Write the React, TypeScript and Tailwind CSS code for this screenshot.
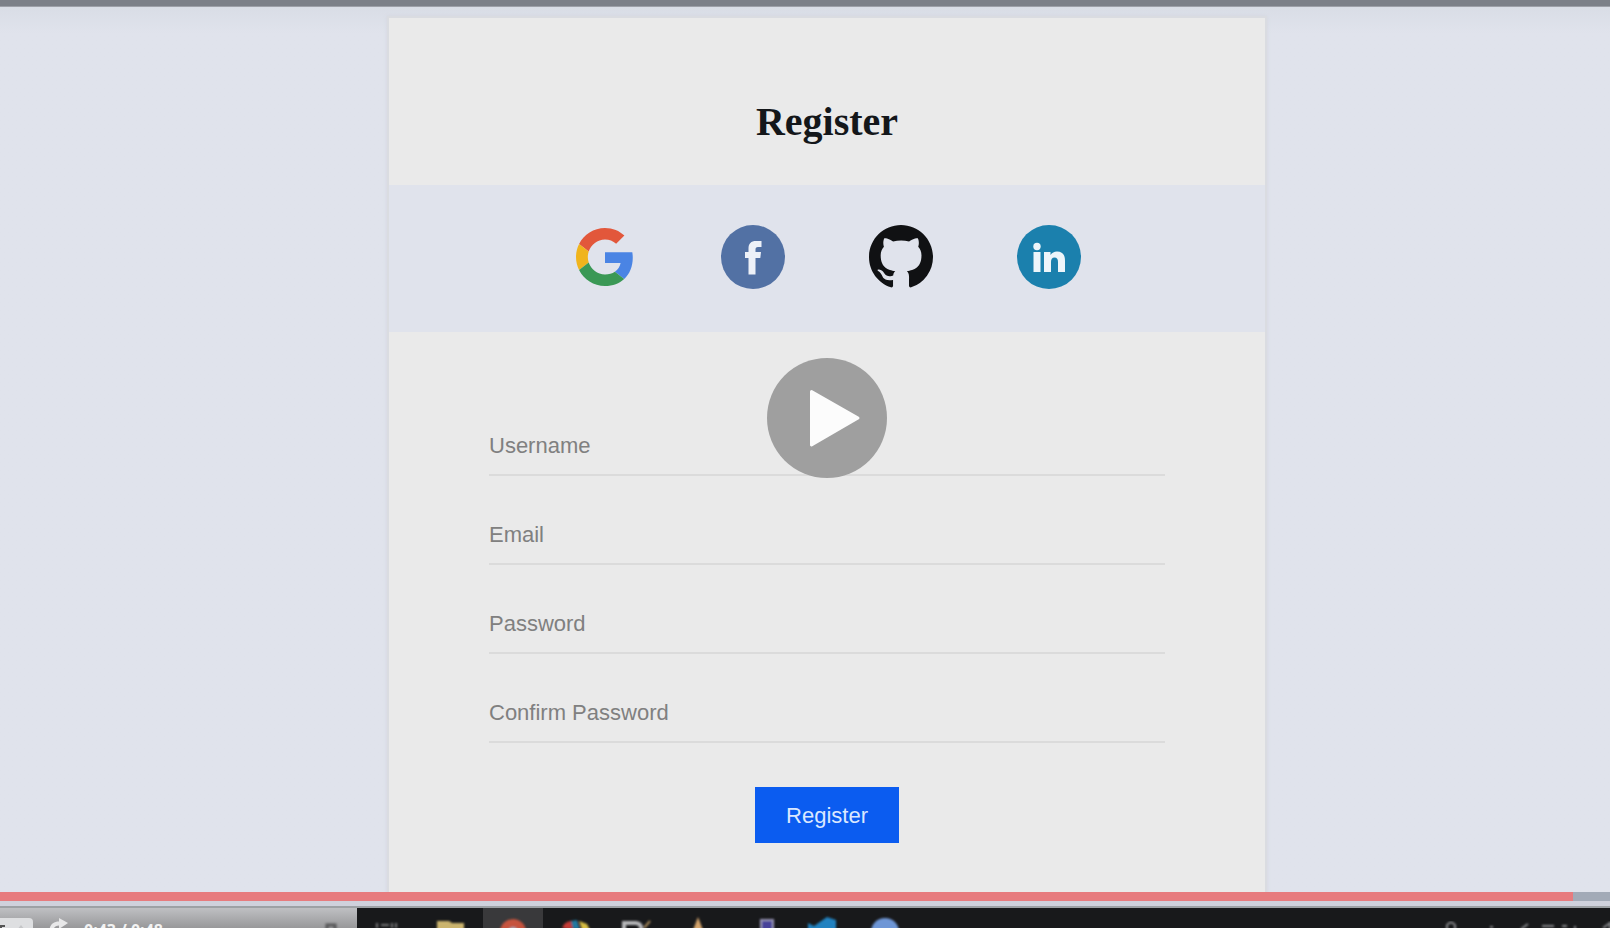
import type { ReactNode } from "react";

const fields = [
  { id: "username", label: "Username", type: "text" },
  { id: "email", label: "Email", type: "email" },
  { id: "password", label: "Password", type: "password" },
  { id: "confirm", label: "Confirm Password", type: "password" },
];

function GoogleIcon() {
  return (
    <svg viewBox="0 0 48 48" className="h-[58px] w-[58px]">
      <path fill="#e2573b" d="M24 9.5c3.54 0 6.71 1.22 9.21 3.6l6.85-6.85C35.9 2.38 30.47 0 24 0 14.62 0 6.51 5.38 2.56 13.22l7.98 6.19C12.43 13.72 17.74 9.5 24 9.5z" />
      <path fill="#4a84e4" d="M46.98 24.55c0-1.57-.15-3.09-.38-4.55H24v9.02h12.94c-.58 2.96-2.26 5.48-4.78 7.18l7.73 6c4.51-4.18 7.09-10.36 7.09-17.65z" />
      <path fill="#f0b41c" d="M10.53 28.59c-.48-1.45-.76-2.99-.76-4.59s.27-3.14.76-4.59l-7.98-6.19C.92 16.46 0 20.12 0 24c0 3.88.92 7.54 2.56 10.78l7.97-6.19z" />
      <path fill="#3a9855" d="M24 48c6.48 0 11.93-2.13 15.89-5.81l-7.73-6c-2.15 1.45-4.92 2.3-8.16 2.3-6.26 0-11.57-4.22-13.47-9.91l-7.98 6.19C6.51 42.62 14.62 48 24 48z" />
    </svg>
  );
}

function FacebookIcon() {
  return (
    <svg viewBox="0 0 64 64" className="h-16 w-16">
      <circle cx="32" cy="32" r="32" fill="#5271a4" />
      <path fill="#edf1f8" d="M27.500 49.500V33H24v-6h3.500v-3.500c0-5 2.500-7.500 7.500-7.500h5.500v6H37c-2 0-2.500 1-2.500 2.500V27H40l-.7 6h-4.800v16.500z" />
    </svg>
  );
}

function GithubIcon() {
  return (
    <svg viewBox="0 0 16 16" className="h-16 w-16">
      <path fill="#101113" d="M8 0C3.580 0 0 3.580 0 8c0 3.540 2.290 6.530 5.470 7.590.4.070.55-.17.55-.38 0-.19-.01-.82-.01-1.490-2.010.37-2.530-.49-2.690-.94-.09-.23-.48-.94-.82-1.130-.28-.15-.68-.52-.01-.53.63-.01 1.080.58 1.230.82.72 1.210 1.870.87 2.330.66.07-.52.28-.87.51-1.070-1.780-.2-3.640-.89-3.640-3.950 0-.87.31-1.590.82-2.150-.08-.2-.36-1.020.08-2.120 0 0 .67-.21 2.200.82.64-.18 1.320-.27 2-.27s1.360.09 2 .27c1.530-1.040 2.200-.82 2.200-.82.44 1.100.16 1.920.08 2.120.51.56.82 1.270.82 2.150 0 3.070-1.870 3.750-3.650 3.950.29.25.54.73.54 1.480 0 1.070-.01 1.930-.01 2.200 0 .21.15.46.55.38A8.010 8.010 0 0 0 16 8c0-4.420-3.580-8-8-8z" />
    </svg>
  );
}

function LinkedinIcon() {
  return (
    <svg viewBox="0 0 64 64" className="h-16 w-16">
      <circle cx="32" cy="32" r="32" fill="#1b80ad" />
      <circle cx="20" cy="21.500" r="3.700" fill="#edf5fa" />
      <path fill="#edf5fa" d="M16.500 27h7v20h-7zM27 27h6.500v3c1.500-2.300 3.700-3.500 6.500-3.500 5.500 0 8 3.500 8 9V47h-7V37c0-3-1-4.500-3.500-4.500s-3.500 2-3.500 4.500v10h-7z" />
    </svg>
  );
}

const providers: { name: string; icon: ReactNode }[] = [
  { name: "Google", icon: <GoogleIcon /> },
  { name: "Facebook", icon: <FacebookIcon /> },
  { name: "GitHub", icon: <GithubIcon /> },
  { name: "LinkedIn", icon: <LinkedinIcon /> },
];

function RegisterCard() {
  return (
    <section className="w-full max-w-[880px] border-2 border-[#dadce1] bg-[#eaeaea] shadow-[0_0_4px_#d3d6df]">
      <h1 className="pt-[79px] pb-[38px] text-center font-['Liberation_Serif',serif] text-[40px] leading-[50px] font-bold text-[#14171a]">
        Register
      </h1>
      <div className="flex h-[147px] items-center justify-center gap-[84px] bg-[#e0e3ec] pb-1">
        {providers.map((p) => (
          <a key={p.name} href="#" aria-label={p.name} className="flex h-16 w-16 items-center justify-center">
            {p.icon}
          </a>
        ))}
      </div>
      <form className="flex flex-col px-[100px] pt-[84px]" onSubmit={(e) => e.preventDefault()}>
        {fields.map((f) => (
          <input
            key={f.id}
            id={f.id}
            type={f.type}
            placeholder={f.label}
            aria-label={f.label}
            className="mb-[29px] h-[60px] w-full border-b-2 border-[#dbdbdb] bg-transparent pt-[2px] text-[22px] text-[#555] outline-none placeholder:text-[#808080]"
          />
        ))}
        <button type="submit" className="mt-[15px] mb-20 h-14 w-36 self-center bg-[#0b5cf0] text-[22px] text-[#dbe8ff]">
          Register
        </button>
      </form>
    </section>
  );
}

function PlayButton() {
  return (
    <button type="button" aria-label="Play" className="absolute top-[351px] left-1/2 h-[120px] w-[120px] -translate-x-1/2 rounded-full bg-[#9f9f9f]">
      <svg viewBox="0 0 120 120" className="h-full w-full">
        <path d="M44.500 33.500 91 60 44.500 87Z" fill="#fcfcfc" stroke="#fcfcfc" strokeWidth="3" strokeLinejoin="round" />
      </svg>
    </button>
  );
}

function Controls() {
  return (
    <div className="flex h-full w-[357px] shrink-0 items-start bg-linear-to-b from-[#bfc0c3] to-[#98989a]">
      <button type="button" aria-label="Speed" className="mt-[10px] h-6 w-[33px] shrink-0 rounded-tr-sm bg-[#dedfe1]">
        <svg viewBox="0 0 33 24" className="h-6 w-[33px]">
          <path d="M5 8H0M1 8v4" stroke="#555" strokeWidth="2" />
          <path d="m21 7-4 5h8z" fill="#c4c5c7" />
        </svg>
      </button>
      <button type="button" aria-label="Share" className="mt-[10px] ml-4 shrink-0">
        <svg viewBox="0 0 20 20" className="h-5 w-5">
          <path d="M10 0 19 5l-9 6V7.500C5 7.500 4 11 4 16H0C0 8 3 3.500 10 3.500Z" fill="#e8e8e9" />
        </svg>
      </button>
      <span className="mt-[10px] ml-[15px] font-['Open_Sans',sans-serif] text-[16px] leading-6 font-bold whitespace-nowrap text-[#f2f2f2]">0:43 / 0:48</span>
      <svg viewBox="0 0 14 10" className="mt-[14px] mr-[19px] ml-auto h-[10px] w-[14px] shrink-0 blur-[1px]">
        <path d="M3 10V3h8v7" fill="none" stroke="#58585a" strokeWidth="3" />
      </svg>
    </div>
  );
}

function Taskbar() {
  return (
    <div className="flex min-w-0 flex-1 justify-between overflow-hidden bg-[#18191b]">
      <svg viewBox="0 0 560 20" className="h-5 w-[560px] shrink-0">
        <defs>
          <filter id="soft" x="-10%" y="-10%" width="120%" height="120%">
            <feGaussianBlur stdDeviation="1" />
          </filter>
        </defs>
        <path d="M126 0h60v20h-60z" fill="#39393b" />
        <g filter="url(#soft)">
          <path d="M20 15v5M24 17h8M35 15v5M39 15v5" stroke="#737476" strokeWidth="2" />
          <path d="M80 13h12l3 2h12v8H80z" fill="#cbb46d" />
          <circle cx="156" cy="24" r="13" fill="#c6533c" />
          <circle cx="156" cy="24" r="5" fill="#a3a1ab" />
          <path d="M205 20q2-6 9-7l2 9z" fill="#c53b35" />
          <path d="m214 13 6-1 3 9h-7z" fill="#2279a0" />
          <path d="m222 13 8 3 3 6h-8z" fill="#d7bd43" />
          <path d="M267 22v-7h12q6 1 5 7" fill="none" stroke="#b7b8ba" strokeWidth="4" />
          <path d="m287 20 6-7" stroke="#a98a59" strokeWidth="2" />
          <path d="m341 9 5 13h-10z" fill="#d4a46c" />
          <path d="M404 22V12h12v10" fill="#46429a" stroke="#9895b7" strokeWidth="2" />
          <path d="m451 15 6 3 13-9 9 3v10h-28" fill="#2182c0" />
          <circle cx="528" cy="24" r="14" fill="#6e96d6" />
        </g>
      </svg>
      <svg viewBox="0 0 190 20" className="h-5 w-[190px] shrink-0">
        <g fill="none" stroke="#86878a" strokeWidth="2" filter="url(#soft)">
          <path d="M27 22v-5q4-5 8 0v5M70 19h3M101 21l7-5M122 18h12M142 18h5M155 18v3M183 20l7-5v7" />
        </g>
      </svg>
    </div>
  );
}

export default function App() {
  return (
    <div className="flex h-screen flex-col overflow-hidden bg-[#e0e3ec] font-['Liberation_Sans',Arial,sans-serif]">
      <div className="h-[7px] shrink-0 border-b border-[#9da0a8] bg-[#7c8088]" />
      <main className="min-h-0 flex-1 overflow-hidden bg-linear-to-b from-[#d9dde6] to-[#e0e3ec] to-3% pl-11">
        <div className="relative flex justify-center pt-[9px]">
          <RegisterCard />
          <PlayButton />
        </div>
      </main>
      <div role="progressbar" aria-label="Playback position" aria-valuenow={98} className="h-[9px] shrink-0 bg-[#a2aab7]">
        <div className="h-full w-[97.700%] bg-[#e77b7e]" />
      </div>
      <div className="h-[7px] shrink-0 border-b-2 border-[#9da1a5] bg-[#cfd1dc]" />
      <footer className="flex h-5 shrink-0 overflow-hidden">
        <Controls />
        <Taskbar />
      </footer>
    </div>
  );
}
